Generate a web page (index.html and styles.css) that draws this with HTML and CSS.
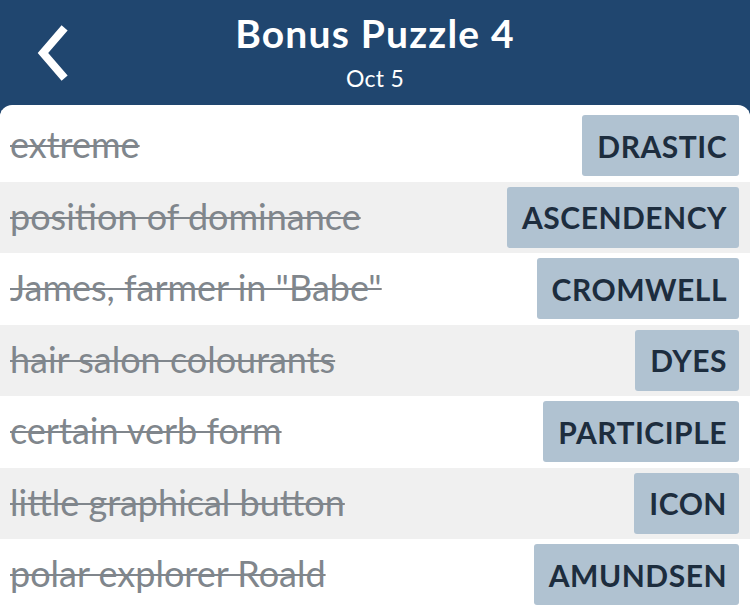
FILE: index.html
```html
<!DOCTYPE html>
<html>
<head>
<meta charset="utf-8">
<link rel="stylesheet" href="styles.css">
</head>
<body>
<div class="app">
  <header class="topbar">
    <button class="back" aria-label="Back">
      <svg width="40" height="60" viewBox="0 0 40 60"><polyline points="29,7 10,29 29,51" fill="none" stroke="#fff" stroke-width="8" stroke-linecap="square" stroke-linejoin="miter"/></svg>
    </button>
    <div class="titles">
      <div class="title">Bonus Puzzle 4</div>
      <div class="subtitle">Oct 5</div>
    </div>
  </header>
  <main class="panel">
    <div class="row"><span class="clue">extreme</span><span class="answer">DRASTIC</span></div>
    <div class="row alt"><span class="clue">position of dominance</span><span class="answer">ASCENDENCY</span></div>
    <div class="row"><span class="clue">James, farmer in "Babe"</span><span class="answer">CROMWELL</span></div>
    <div class="row alt"><span class="clue">hair salon colourants</span><span class="answer">DYES</span></div>
    <div class="row"><span class="clue">certain verb form</span><span class="answer">PARTICIPLE</span></div>
    <div class="row alt"><span class="clue">little graphical button</span><span class="answer">ICON</span></div>
    <div class="row"><span class="clue">polar explorer Roald</span><span class="answer">AMUNDSEN</span></div>
  </main>
</div>
</body>
</html>
```
FILE: styles.css
```css
html, body {
  margin: 0;
  padding: 0;
  height: 100%;
  overflow: hidden;
}
body {
  background: #20466f;
  font-family: "Lato", "Noto Sans", sans-serif;
}
.app {
  display: flex;
  flex-direction: column;
  height: 611px;
}
.topbar {
  height: 105px;
  flex: none;
  display: flex;
  position: relative;
  background: #20466f;
  box-sizing: border-box;
  padding-top: 11px;
}
.back {
  position: absolute;
  left: 33px;
  top: 24px;
  background: none;
  border: 0;
  padding: 0;
  width: 40px;
  height: 60px;
}
.back svg { display: block; }
.titles {
  flex: 1;
  display: flex;
  flex-direction: column;
  align-items: center;
  color: #fff;
}
.title {
  font-size: 39px;
  font-weight: 700;
  line-height: 44px;
  letter-spacing: 1.2px;
}
.subtitle {
  font-size: 23px;
  line-height: 30px;
  margin-top: 8px;
  letter-spacing: 0.3px;
}
.panel {
  flex: 1;
  background: #fff;
  border-radius: 12px 12px 0 0;
  padding-top: 5px;
  display: flex;
  flex-direction: column;
  overflow: hidden;
}
.row {
  height: 71.5px;
  flex: none;
  display: flex;
  align-items: center;
  justify-content: space-between;
  padding: 0 11px 0 10px;
  background: #fff;
}
.row.alt { background: #f0f0f0; }
.clue {
  font-size: 36px;
  line-height: 40px;
  padding-bottom: 3px;
  color: #80868c;
  text-decoration: line-through;
  text-decoration-thickness: 2px;
  white-space: nowrap;
}
.answer {
  background: #b0c2d1;
  color: #1d2d3e;
  font-weight: 700;
  font-size: 30px;
  height: 61px;
  display: flex;
  align-items: center;
  padding: 0 12px 0 15px;
  border-radius: 3px;
  letter-spacing: 0.5px;
}
```
